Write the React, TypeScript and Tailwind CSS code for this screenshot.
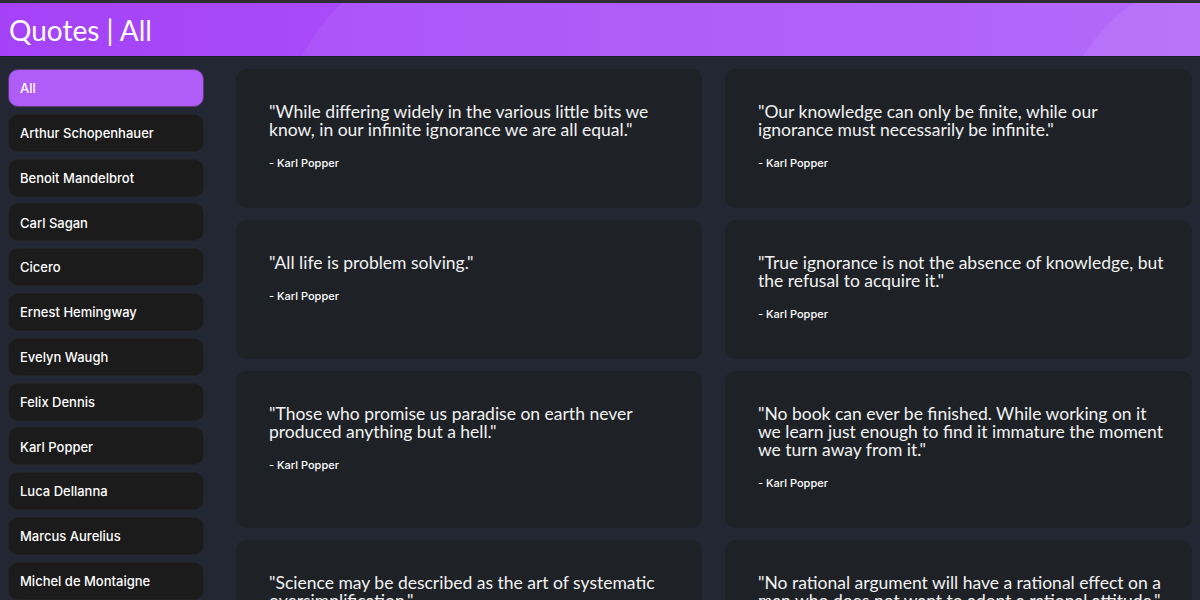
import React from "react";

const authors = [
  "All",
  "Arthur Schopenhauer",
  "Benoit Mandelbrot",
  "Carl Sagan",
  "Cicero",
  "Ernest Hemingway",
  "Evelyn Waugh",
  "Felix Dennis",
  "Karl Popper",
  "Luca Dellanna",
  "Marcus Aurelius",
  "Michel de Montaigne",
  "Nassim Taleb",
];

const quotes: string[][] = [
  ['"While differing widely in the various little bits we', 'know, in our infinite ignorance we are all equal."'],
  ['"Our knowledge can only be finite, while our', 'ignorance must necessarily be infinite."'],
  ['"All life is problem solving."'],
  ['"True ignorance is not the absence of knowledge, but', 'the refusal to acquire it."'],
  ['"Those who promise us paradise on earth never', 'produced anything but a hell."'],
  ['"No book can ever be finished. While working on it', 'we learn just enough to find it immature the moment', 'we turn away from it."'],
  ['"Science may be described as the art of systematic', 'oversimplification."'],
  ['"No rational argument will have a rational effect on a', 'man who does not want to adopt a rational attitude."'],
];

function HeaderBg() {
  return (
    <svg className="absolute inset-0 h-full w-full" viewBox="0 0 1200 54" preserveAspectRatio="none">
      <defs>
        <linearGradient id="hg" x1="0" y1="0" x2="1" y2="0">
          <stop offset="0" stopColor="#a542f7" />
          <stop offset="1" stopColor="#b061fa" />
        </linearGradient>
      </defs>
      <rect x="0" y="0" width="1200" height="54" fill="url(#hg)" />
      <path d="M302 54 Q318 22 342 0 L1200 0 L1200 54 Z" fill="#ffffff" fillOpacity="0.06" />
      <path d="M1083 54 Q1103 22 1133 0 L1200 0 L1200 54 Z" fill="#ffffff" fillOpacity="0.07" />
    </svg>
  );
}

export default function App() {
  return (
    <div className="h-[600px] w-[1200px] overflow-hidden bg-[#222733]" style={{ fontFamily: "Inter, 'Liberation Sans', sans-serif" }}>
      <div className="h-[3px] bg-[#2c2e33]" />
      <header className="relative h-[54px] border-b border-[#1d2027]">
        <HeaderBg />
        <h1
          className="relative flex h-full items-center pl-[9px] text-[28px] font-normal text-white"
          style={{ fontFamily: "Lato, 'Noto Sans', sans-serif" }}
        >
          Quotes | All
        </h1>
      </header>
      <div className="flex">
        <aside className="flex w-[212px] shrink-0 flex-col gap-[6.8px] px-2 pt-[12px]">
          {authors.map((a, i) => (
            <div
              key={a}
              className={
                i === 0
                  ? "flex h-[38px] items-center rounded-[10px] border border-[#5a3a7a] bg-[#b05cf8] pl-[11px] pt-[2px] text-[13px] font-medium text-white"
                  : "flex h-[38px] items-center rounded-[10px] border border-[#222] bg-[#1b1b1b] pl-[11px] pt-[2px] text-[13px] font-medium text-white"
              }
            >
              {a}
            </div>
          ))}
        </aside>
        <main className="grid flex-1 grid-cols-[466px_467px] content-start gap-x-[23px] gap-y-[12px] pl-[24px] pr-2 pt-[12px]">
          {quotes.map((lines, i) => (
            <div key={i} className="rounded-[10px] bg-[#1e2227] pb-[38px] pl-[33px] pr-[20px] pt-[34px]">
              <p className="text-[17.5px] leading-[18px] text-[#f2f2f2]" style={{ fontFamily: "Lato, 'Noto Sans', sans-serif" }}>
                {lines.map((l, j) => (
                  <span key={j} className="block whitespace-nowrap">
                    {l}
                  </span>
                ))}
              </p>
              <p className="mt-[17px] text-[11px] font-medium leading-[14px] text-white">- Karl Popper</p>
            </div>
          ))}
        </main>
      </div>
    </div>
  );
}
